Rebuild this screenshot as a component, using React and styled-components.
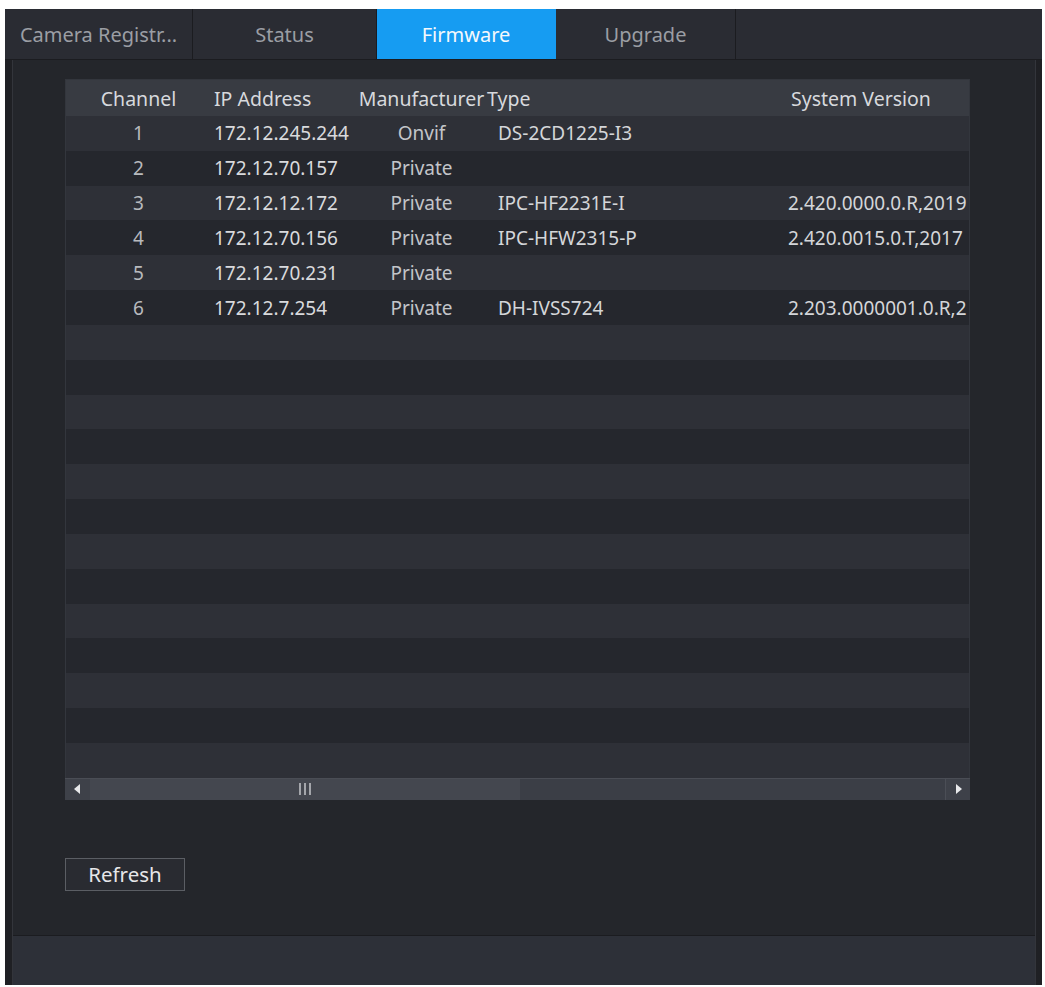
import React from 'react';
import styled, { createGlobalStyle } from 'styled-components';

const GlobalStyle = createGlobalStyle`
    html, body {
        margin: 0;
        padding: 0;
        background: #ffffff;
    }
    body {
        font-family: "Noto Sans", "Open Sans", Arial, sans-serif;
    }
`;

const Page = styled.div`
    padding: 9px 3px 2px 5px;
    height: 987px;
    box-sizing: border-box;
`;

const Frame = styled.div`
    height: 100%;
    display: flex;
    flex-direction: column;
    background: #1f2024;
`;

const TabBar = styled.div`
    display: flex;
    height: 51px;
    background: #2a2c33;
    border-bottom: 1px solid #1b1c20;
    box-sizing: border-box;
`;

const Tab = styled.div`
    width: ${(p) => p.$w}px;
    display: flex;
    align-items: center;
    justify-content: center;
    font-size: 20px;
    color: ${(p) => (p.$active ? '#f4f8fc' : '#9b9ea4')};
    background: ${(p) => (p.$active ? '#169cf2' : 'transparent')};
    border-right: 1px solid ${(p) => (p.$active ? '#169cf2' : '#1b1c20')};
    white-space: nowrap;
`;

const Panel = styled.div`
    flex: 1;
    margin: 0 6px 0 7px;
    display: flex;
    flex-direction: column;
    background: #24262b;
    border-left: 1px solid #33353b;
    border-right: 1px solid #33353b;
`;

const Content = styled.div`
    flex: 1;
    padding: 19px 0 0 52px;
`;

const TableBox = styled.div`
    width: 905px;
    overflow: hidden;
    border: 1px solid #33363d;
    border-bottom: none;
    box-sizing: border-box;
`;

const Grid = styled.div`
    display: grid;
    grid-template-columns: 145px 145px 131px 299px 300px;
    align-items: center;
    width: 1020px;
    height: ${(p) => p.$h}px;
    background: ${(p) => p.$bg};
    white-space: nowrap;
`;

const HeadCell = styled.div`
    font-size: 19.5px;
    color: #d7d9dd;
    text-align: ${(p) => p.$align || 'left'};
    padding-left: ${(p) => p.$pad || 0}px;
`;

const Cell = styled.div`
    font-size: 19px;
    color: ${(p) => p.$color || '#cfd1d4'};
    text-align: ${(p) => p.$align || 'left'};
    padding-left: ${(p) => p.$pad || 0}px;
    overflow: hidden;
`;

const ScrollBar = styled.div`
    width: 905px;
    height: 22px;
    display: flex;
    align-items: center;
    background: #3b3e46;
    border-top: 1px solid #4a4d55;
    box-sizing: border-box;
`;

const ArrowButton = styled.div`
    width: 25px;
    height: 100%;
    display: flex;
    align-items: center;
    justify-content: center;
    background: #3e4149;
    border-left: ${(p) => (p.$right ? '1px solid #4b4e56' : 'none')};
    box-sizing: border-box;
`;

const Thumb = styled.div`
    width: 430px;
    height: 100%;
    display: flex;
    align-items: center;
    justify-content: center;
    background: #44474f;
`;

const Track = styled.div`
    flex: 1;
`;

const Button = styled.button`
    margin-top: 58px;
    width: 120px;
    height: 33px;
    background: #292b31;
    border: 1px solid #5b5e64;
    color: #e6e7e9;
    font-family: "Noto Sans", "Open Sans", Arial, sans-serif;
    font-size: 20.5px;
    padding: 0;
`;

const BottomBar = styled.div`
    height: 49px;
    background: #2d3038;
    border-top: 1px solid #1b1c20;
`;

const tabs = [
    { label: 'Camera Registr...', w: 187 },
    { label: 'Status', w: 183 },
    { label: 'Firmware', w: 178, active: true },
    { label: 'Upgrade', w: 179 },
];

const cameras = [
    ['1', '172.12.245.244', 'Onvif', 'DS-2CD1225-I3', ''],
    ['2', '172.12.70.157', 'Private', '', ''],
    ['3', '172.12.12.172', 'Private', 'IPC-HF2231E-I', '2.420.0000.0.R,2019'],
    ['4', '172.12.70.156', 'Private', 'IPC-HFW2315-P', '2.420.0015.0.T,2017'],
    ['5', '172.12.70.231', 'Private', '', ''],
    ['6', '172.12.7.254', 'Private', 'DH-IVSS724', '2.203.0000001.0.R,2'],
];

const ROWS = 19;

const App = () => {
    const rows = [];
    for (let i = 0; i < ROWS; i++) {
        rows.push(cameras[i] || ['', '', '', '', '']);
    }

    return (
        <Page>
            <GlobalStyle />
            <Frame>
                <TabBar>
                    {tabs.map((t) => (
                        <Tab key={t.label} $w={t.w} $active={t.active}>
                            {t.label}
                        </Tab>
                    ))}
                </TabBar>
                <Panel>
                    <Content>
                        <TableBox>
                            <Grid $h={36} $bg="#383b42">
                                <HeadCell $align="center">Channel</HeadCell>
                                <HeadCell $pad={3}>IP Address</HeadCell>
                                <HeadCell $align="center">Manufacturer</HeadCell>
                                <HeadCell>Type</HeadCell>
                                <HeadCell $pad={5}>System Version</HeadCell>
                            </Grid>
                            {rows.map((r, i) => (
                                <Grid key={i} $h={34.84} $bg={i % 2 === 0 ? '#2e3037' : '#25272d'}>
                                    <Cell $align="center" $color="#b8babe">{r[0]}</Cell>
                                    <Cell $pad={3} $color="#d9dadd">{r[1]}</Cell>
                                    <Cell $align="center" $color="#c3c5c9">{r[2]}</Cell>
                                    <Cell $pad={11} $color="#d4d6d9">{r[3]}</Cell>
                                    <Cell $pad={2} $color="#d4d6d9">{r[4]}</Cell>
                                </Grid>
                            ))}
                        </TableBox>
                        <ScrollBar>
                            <ArrowButton>
                                <svg width="7" height="10" viewBox="0 0 7 10">
                                    <path d="M6 0 L0 5 L6 10 Z" fill="#e8e9eb" />
                                </svg>
                            </ArrowButton>
                            <Thumb>
                                <svg width="14" height="14" viewBox="0 0 14 14">
                                    <path d="M2 1 V13 M7 1 V13 M12 1 V13" stroke="#c4c6ca" strokeWidth="1.5" />
                                </svg>
                            </Thumb>
                            <Track />
                            <ArrowButton $right>
                                <svg width="7" height="10" viewBox="0 0 7 10">
                                    <path d="M1 0 L7 5 L1 10 Z" fill="#e8e9eb" />
                                </svg>
                            </ArrowButton>
                        </ScrollBar>
                        <Button>Refresh</Button>
                    </Content>
                    <BottomBar />
                </Panel>
            </Frame>
        </Page>
    );
};

export default App;
